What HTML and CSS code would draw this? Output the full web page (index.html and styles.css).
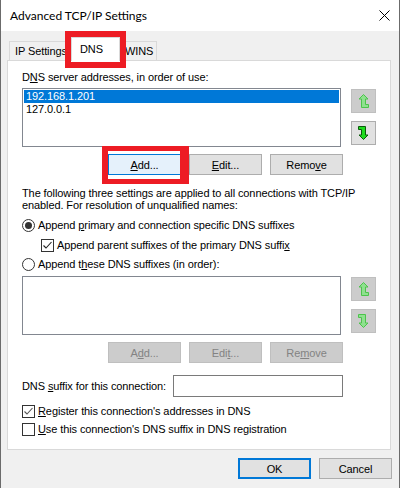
FILE: index.html
```html
<!DOCTYPE html>
<html>
<head>
<meta charset="utf-8">
<link rel="stylesheet" href="styles.css">
</head>
<body>
<div class="window">
  <div class="titlebar">
    <span class="title">Advanced TCP/IP Settings</span>
    <svg class="close" width="11" height="11" viewBox="0 0 11 11"><path d="M0.5 0.5 L10.5 10.5 M10.5 0.5 L0.5 10.5" stroke="#000" stroke-width="1"/></svg>
  </div>
  <div class="client">
    <div class="tabs">
      <div class="tab tab-ip">IP Settings</div>
      <div class="tab tab-dns active">DNS<span class="mark mark-tab"></span></div>
      <div class="tab tab-wins">WINS</div>
    </div>
    <div class="panel">
      <div class="label">D<u>N</u>S server addresses, in order of use:</div>
      <div class="list-row">
        <div class="listbox">
          <div class="item sel">192.168.1.201</div>
          <div class="item">127.0.0.1</div>
        </div>
        <div class="arrows">
          <div class="arrow disabled">
            <svg width="12" height="15" viewBox="0 0 12 15"><path d="M5.5 0.5 L10 5 L7.5 5 L7.5 10.5 L10.5 10.5 L10.5 13.5 L3.5 13.5 L3.5 5 L1 5 Z" fill="#8fe08f" stroke="#4cc44c"/></svg>
          </div>
          <div class="arrow">
            <svg width="12" height="15" viewBox="0 0 12 15"><path d="M0.5 0.5 L7.5 0.5 L7.5 9 L10 9 L5.5 13.5 L1 9 L3.5 9 L3.5 3.5 L0.5 3.5 Z" fill="#1edc1e" stroke="#0a5a0a"/></svg>
          </div>
        </div>
      </div>
      <div class="btn-row">
        <div class="btn focus"><span><u>A</u>dd...</span><span class="mark mark-add"></span></div>
        <div class="btn"><u>E</u>dit...</div>
        <div class="btn">Remo<u>v</u>e</div>
      </div>
      <p class="info">The following three settings are applied to all connections with TCP/IP enabled. For resolution of unqualified names:</p>
      <div class="opt opt-r1"><span class="radio checked"></span><span class="txt">Append <u>p</u>rimary and connection specific DNS suffixes</span></div>
      <div class="opt opt-c1 indent"><span class="check checked"><svg width="11" height="11" viewBox="0 0 11 11"><path d="M1.5 5.5 L4 8 L9.5 2" fill="none" stroke="#222" stroke-width="1.1"/></svg></span><span class="txt">Append parent suffixes of the primary DNS suffi<u>x</u></span></div>
      <div class="opt opt-r2"><span class="radio"></span><span class="txt">Append t<u>h</u>ese DNS suffixes (in order):</span></div>
      <div class="list-row list2">
        <div class="listbox"></div>
        <div class="arrows">
          <div class="arrow disabled">
            <svg width="12" height="15" viewBox="0 0 12 15"><path d="M5.5 0.5 L10 5 L7.5 5 L7.5 10.5 L10.5 10.5 L10.5 13.5 L3.5 13.5 L3.5 5 L1 5 Z" fill="#8fe08f" stroke="#4cc44c"/></svg>
          </div>
          <div class="arrow disabled">
            <svg width="12" height="15" viewBox="0 0 12 15"><path d="M0.5 0.5 L7.5 0.5 L7.5 9 L10 9 L5.5 13.5 L1 9 L3.5 9 L3.5 3.5 L0.5 3.5 Z" fill="#8fe08f" stroke="#4cc44c"/></svg>
          </div>
        </div>
      </div>
      <div class="btn-row">
        <div class="btn disabled">A<u>d</u>d...</div>
        <div class="btn disabled">Edi<u>t</u>...</div>
        <div class="btn disabled">Re<u>m</u>ove</div>
      </div>
      <div class="suffix-row">
        <span>DNS <u>s</u>uffix for this connection:</span>
        <div class="input"></div>
      </div>
      <div class="opt opt-c2"><span class="check checked"><svg width="11" height="11" viewBox="0 0 11 11"><path d="M1.5 5.5 L4 8 L9.5 2" fill="none" stroke="#555" stroke-width="1.1"/></svg></span><span class="txt"><u>R</u>egister this connection's addresses in DNS</span></div>
      <div class="opt opt-c3"><span class="check"></span><span class="txt"><u>U</u>se this connection's DNS suffix in DNS registration</span></div>
    </div>
    <div class="footer">
      <div class="btn default">OK</div>
      <div class="btn">Cancel</div>
    </div>
  </div>
</div>
</body>
</html>
```
FILE: styles.css
```css
* { box-sizing: border-box; }
html, body { margin: 0; padding: 0; }
body {
  width: 400px;
  height: 488px;
  overflow: hidden;
  background: #f0f0f0;
  font-family: "Liberation Sans", Arial, sans-serif;
  font-size: 11px;
  letter-spacing: -0.1px;
  color: #000;
}
u { text-decoration: underline; text-underline-offset: 1px; }

.window {
  width: 400px;
  height: 488px;
  display: flex;
  flex-direction: column;
  border-left: 1px solid #6b6b6b;
  border-right: 1px solid #6b6b6b;
  background: #f0f0f0;
}

.titlebar {
  height: 31px;
  flex: none;
  background: #fff;
  display: flex;
  align-items: center;
  justify-content: space-between;
  padding: 0 9px 1px 9px;
}
.title {
  font-family: Lato, "Noto Sans", sans-serif;
  font-size: 12px;
  letter-spacing: 0;
}
.close { display: block; margin-top: 0; }

.client {
  flex: 1;
  display: flex;
  flex-direction: column;
  padding: 6px 8px 0 6px;
}

.tabs {
  display: flex;
  align-items: flex-end;
  height: 23px;
  margin-left: 2px;
  position: relative;
  z-index: 2;
}
.tab {
  height: 19px;
  border: 1px solid #d9d9d9;
  border-bottom: none;
  background: #f0f0f0;
  display: flex;
  align-items: center;
  padding-left: 5px;
  position: relative;
}
.tab-ip { width: 62px; border-right: none; }
.tab-dns {
  width: 49px;
  height: 24px;
  margin-bottom: -1px;
  background: #fff;
  padding-left: 8px;
  padding-bottom: 2px;
}
.tab-wins { width: 37px; border-left: none; }

.mark {
  position: absolute;
  border: 6px solid #ed1c24;
  z-index: 5;
}
.mark-tab { left: -7px; top: -7px; right: -7px; bottom: -7px; }
.mark-add {
  left: -7px;
  top: -9px;
  right: -9px;
  bottom: -10px;
  border-width: 5px 9px 5px 6px;
}

.panel {
  width: 384px;
  height: 390px;
  flex: none;
  background: #fff;
  border: 1px solid #d9d9d9;
  padding: 9px 14px 0 14px;
  position: relative;
  z-index: 1;
}

.label { height: 14px; line-height: 14px; }

.list-row { display: flex; margin-top: 4px; }
.listbox {
  width: 321px;
  height: 59px;
  border: 1px solid #828790;
  background: #fff;
  padding: 1px;
}
.item {
  height: 13px;
  line-height: 13px;
  padding-left: 2px;
}
.item.sel { background: #0078d7; color: #fff; }

.arrows {
  display: flex;
  flex-direction: column;
  gap: 8px;
  margin-left: 10px;
  padding-top: 1px;
}
.arrow {
  width: 25px;
  height: 24px;
  border: 1px solid #adadad;
  background: #e1e1e1;
  display: flex;
  align-items: center;
  justify-content: center;
}
.arrow.disabled { background: #cccccc; border-color: #bfbfbf; }
.arrow svg { display: block; }

.btn-row {
  width: 321px;
  display: flex;
  justify-content: flex-end;
  gap: 8px;
  margin-top: 7px;
}
.btn {
  width: 73px;
  height: 21px;
  border: 1px solid #adadad;
  background: #e1e1e1;
  display: flex;
  align-items: center;
  justify-content: center;
  position: relative;
}
.btn.focus { background: #e5f1fb; border-color: #0078d7; }
.btn.default { border: 2px solid #0078d7; }
.btn.disabled { background: #cccccc; border-color: #bfbfbf; color: #838383; }

.info {
  margin: 12px 0 0 0;
  line-height: 12px;
  width: 350px;
}

.opt {
  height: 14px;
  display: flex;
  align-items: center;
}
.opt .txt { margin-left: 3px; }
.opt-r1 { margin-top: 7px; }
.opt-c1 { margin-top: 6px; }
.opt-r2 { margin-top: 5px; }
.indent { padding-left: 19px; }

.radio {
  width: 13px;
  height: 13px;
  border: 1px solid #333;
  border-radius: 50%;
  background: #fff;
  display: flex;
  align-items: center;
  justify-content: center;
  flex: none;
}
.radio.checked::after {
  content: "";
  width: 7px;
  height: 7px;
  border-radius: 50%;
  background: #333;
}
.check {
  width: 13px;
  height: 13px;
  border: 1px solid #333;
  background: #fff;
  display: flex;
  align-items: center;
  justify-content: center;
  flex: none;
}
.check svg { display: block; }

.list2 { margin-top: 5px; }

.suffix-row {
  width: 321px;
  height: 22px;
  display: flex;
  align-items: center;
  margin-top: 12px;
}
.input {
  margin-left: auto;
  width: 170px;
  height: 22px;
  border: 1px solid #7a7a7a;
  background: #fff;
}

.opt-c2 { margin-top: 7px; }
.opt-c3 { margin-top: 4px; }

.footer {
  display: flex;
  justify-content: flex-end;
  gap: 8px;
  margin-top: 8px;
  margin-right: -1px;
}
```
